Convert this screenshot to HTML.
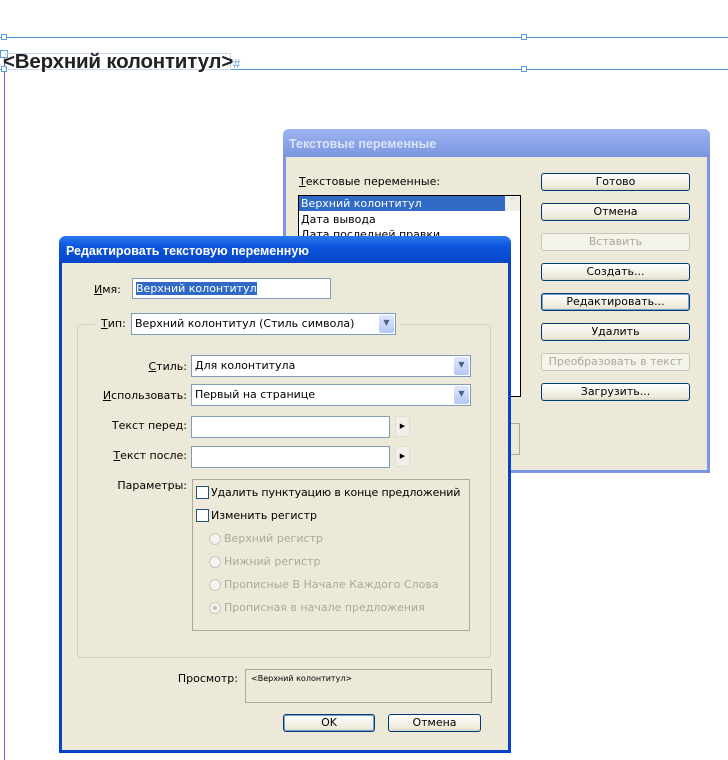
<!DOCTYPE html>
<html><head><meta charset="utf-8"><style>
*{box-sizing:border-box;margin:0;padding:0}
body{width:728px;height:760px;background:#fff;position:relative;overflow:hidden;font-family:"DejaVu Sans","Liberation Sans",sans-serif;font-size:11px;color:#000}
.a{position:absolute}
.btn{position:absolute;border:1px solid #003c74;border-radius:3px;background:linear-gradient(#fff,#ece9d8 85%,#d6d0c5);text-align:center;font-size:11px;line-height:16px}
.dis{border-color:#c9c7ba;color:#aca899;background:#f5f4ea}
.inp{position:absolute;background:#fff;border:1px solid #7f9db9;font-size:11px;padding-left:3px;line-height:18px}
.dd{position:absolute;right:1px;top:1px;width:15px;bottom:1px;background:linear-gradient(#dfe8fd,#b4c8f6);border-radius:2px;color:#4d6185;font-size:8px;text-align:center;line-height:16px}
.lbl{position:absolute;text-align:right;font-size:11px}
.gray{color:#aca899}
.rad{position:absolute;width:12px;height:12px;border-radius:50%;border:1px solid #cac8bb;background:#f4f3ee}
.chk{position:absolute;width:13px;height:13px;border:1px solid #1c5180;background:#fff}
.arr{position:absolute;width:15px;height:21px;background:#f0efe8;border:1px solid #e0ded2;font-size:7px;text-align:center;line-height:19px}
.tt{font-family:"Liberation Sans",sans-serif;font-weight:bold;font-size:12.5px}
</style></head><body>
<div class="a" style="left:0;top:37px;width:728px;height:1px;background:#5b9bd5"></div>
<div class="a" style="left:0;top:69px;width:728px;height:1px;background:#5b9bd5"></div>
<div class="a" style="left:4px;top:55px;width:1px;height:705px;background:#9b4fd6"></div>
<div class="a" style="left:1px;top:34px;width:6px;height:6px;border:1px solid #5b9bd5;background:#fff"></div>
<div class="a" style="left:521px;top:34px;width:6px;height:6px;border:1px solid #5b9bd5;background:#fff"></div>
<div class="a" style="left:521px;top:66px;width:6px;height:6px;border:1px solid #5b9bd5;background:#fff"></div>
<div class="a" style="left:0;top:50px;width:8px;height:8px;border:1px solid #5b9bd5;background:#fff"></div>
<div class="a" style="left:1px;top:66px;width:6px;height:6px;border:1px solid #5b9bd5;background:#fff"></div>
<div class="a" style="left:5px;top:53px;width:226px;height:17px;border:1px solid #c8d8f0"></div>
<div class="a" style="left:3px;top:50px;font-family:'Liberation Sans',sans-serif;font-weight:bold;font-size:20.5px;color:#222;letter-spacing:-0.2px;line-height:24px">&lt;Верхний колонтитул&gt;<span style="color:#5b9bd5;font-weight:normal;font-size:13px">#</span></div>

<div class="a" style="left:283px;top:129px;width:427px;height:344px;background:#ece9d8;border:3px solid #7d96e2;border-top:0;border-radius:6px 6px 0 0"></div>
<div class="a tt" style="left:283px;top:129px;width:427px;height:28px;background:linear-gradient(#9db4f0,#7b95e0);border-radius:6px 6px 0 0;color:#d8e4f8;padding:8px 0 0 6px">Текстовые переменные</div>
<div class="a" style="left:299px;top:175px"><u>Т</u>екстовые переменные:</div>
<div class="a" style="left:298px;top:195px;width:223px;height:202px;background:#fff;border:1px solid #000"></div>
<div class="a" style="left:299px;top:196px;width:206px;height:15px;background:#316ac5;color:#fff;padding-left:2px;line-height:15px">Верхний колонтитул</div>
<div class="a" style="left:301px;top:212px;line-height:15px">Дата вывода</div>
<div class="a" style="left:301px;top:227px;line-height:15px">Дата последней правки</div>
<div class="a" style="left:505px;top:196px;width:15px;height:15px;background:#f0efe8;color:#c0c0c0;font-size:8px;text-align:center">^</div>
<div class="a" style="left:510px;top:423px;width:10px;height:32px;border:1px solid #aca899;border-left:0"></div>
<div class="btn" style="left:541px;top:173px;width:149px;height:18px">Готово</div>
<div class="btn" style="left:541px;top:203px;width:149px;height:18px">Отмена</div>
<div class="btn dis" style="left:541px;top:233px;width:149px;height:18px">Вставить</div>
<div class="btn" style="left:541px;top:263px;width:149px;height:18px">Создать...</div>
<div class="btn" style="left:541px;top:293px;width:149px;height:18px;box-shadow:inset 0 0 0 1px #7da2ce">Редактировать...</div>
<div class="btn" style="left:541px;top:323px;width:149px;height:18px">Удалить</div>
<div class="btn dis" style="left:541px;top:353px;width:149px;height:18px">Преобразовать в текст</div>
<div class="btn" style="left:541px;top:383px;width:149px;height:18px">Загрузить...</div>

<div class="a" style="left:59px;top:236px;width:452px;height:517px;background:#ece9d8;border:3px solid #0842c8;border-top:0;border-radius:7px 7px 0 0"></div>
<div class="a tt" style="left:59px;top:236px;width:452px;height:27px;background:linear-gradient(#2a78f0,#0a55dc 40%,#0846c8);border-radius:7px 7px 0 0;color:#fff;padding:8px 0 0 7px">Редактировать текстовую переменную</div>
<div class="lbl" style="left:94px;top:283px"><u>И</u>мя:</div>
<div class="inp" style="left:132px;top:278px;width:199px;height:21px;padding-top:1px"><span style="background:#316ac5;color:#fff">Верхний колонтитул</span></div>
<div class="a" style="left:77px;top:324px;width:414px;height:334px;border:1px solid #d0d0bf;border-radius:4px"></div>
<div class="a" style="left:95px;top:312px;width:305px;height:26px;background:#ece9d8"></div>
<div class="lbl" style="left:101px;top:317px"><u>Т</u>ип:</div>
<div class="inp" style="left:131px;top:313px;width:265px;height:22px;line-height:20px">Верхний колонтитул (Стиль символа)<div class="dd">&#9660;</div></div>
<div class="lbl" style="left:145px;top:360px;width:42px"><u>С</u>тиль:</div>
<div class="inp" style="left:191px;top:355px;width:280px;height:22px;line-height:20px">Для колонтитула<div class="dd">&#9660;</div></div>
<div class="lbl" style="left:100px;top:389px;width:87px"><u>И</u>спользовать:</div>
<div class="inp" style="left:191px;top:384px;width:280px;height:22px;line-height:20px">Первый на странице<div class="dd">&#9660;</div></div>
<div class="lbl" style="left:100px;top:419px;width:87px">Текст перед:</div>
<div class="inp" style="left:191px;top:416px;width:199px;height:22px"></div>
<div class="arr" style="left:395px;top:416px">&#9654;</div>
<div class="lbl" style="left:100px;top:449px;width:87px"><u>Т</u>екст после:</div>
<div class="inp" style="left:191px;top:446px;width:199px;height:22px"></div>
<div class="arr" style="left:395px;top:446px">&#9654;</div>
<div class="lbl" style="left:100px;top:479px;width:87px">Параметры:</div>
<div class="a" style="left:192px;top:479px;width:278px;height:152px;border:1px solid #aca899"></div>
<div class="chk" style="left:196px;top:486px"></div>
<div class="a" style="left:211px;top:486px;letter-spacing:-0.15px">Удалить пунктуацию в конце предложений</div>
<div class="chk" style="left:196px;top:509px"></div>
<div class="a" style="left:211px;top:509px">Изменить регистр</div>
<div class="rad" style="left:209px;top:533px"></div><div class="a gray" style="left:224px;top:532px">Верхний регистр</div>
<div class="rad" style="left:209px;top:556px"></div><div class="a gray" style="left:224px;top:555px">Нижний регистр</div>
<div class="rad" style="left:209px;top:579px"></div><div class="a gray" style="left:224px;top:578px">Прописные В Начале Каждого Слова</div>
<div class="rad" style="left:209px;top:602px"></div><div class="a" style="left:213px;top:606px;width:4px;height:4px;border-radius:50%;background:#c0c0b8"></div><div class="a gray" style="left:224px;top:601px">Прописная в начале предложения</div>
<div class="lbl" style="left:150px;top:672px;width:88px">Просмотр:</div>
<div class="a" style="left:245px;top:669px;width:247px;height:34px;border:1px solid #aca899"></div>
<div class="a" style="left:251px;top:674px;font-size:8px">&lt;Верхний колонтитул&gt;</div>
<div class="btn" style="left:283px;top:714px;width:92px;height:18px;box-shadow:inset 0 0 0 1px #7da2ce">OK</div>
<div class="btn" style="left:388px;top:714px;width:93px;height:18px">Отмена</div>
</body></html>
